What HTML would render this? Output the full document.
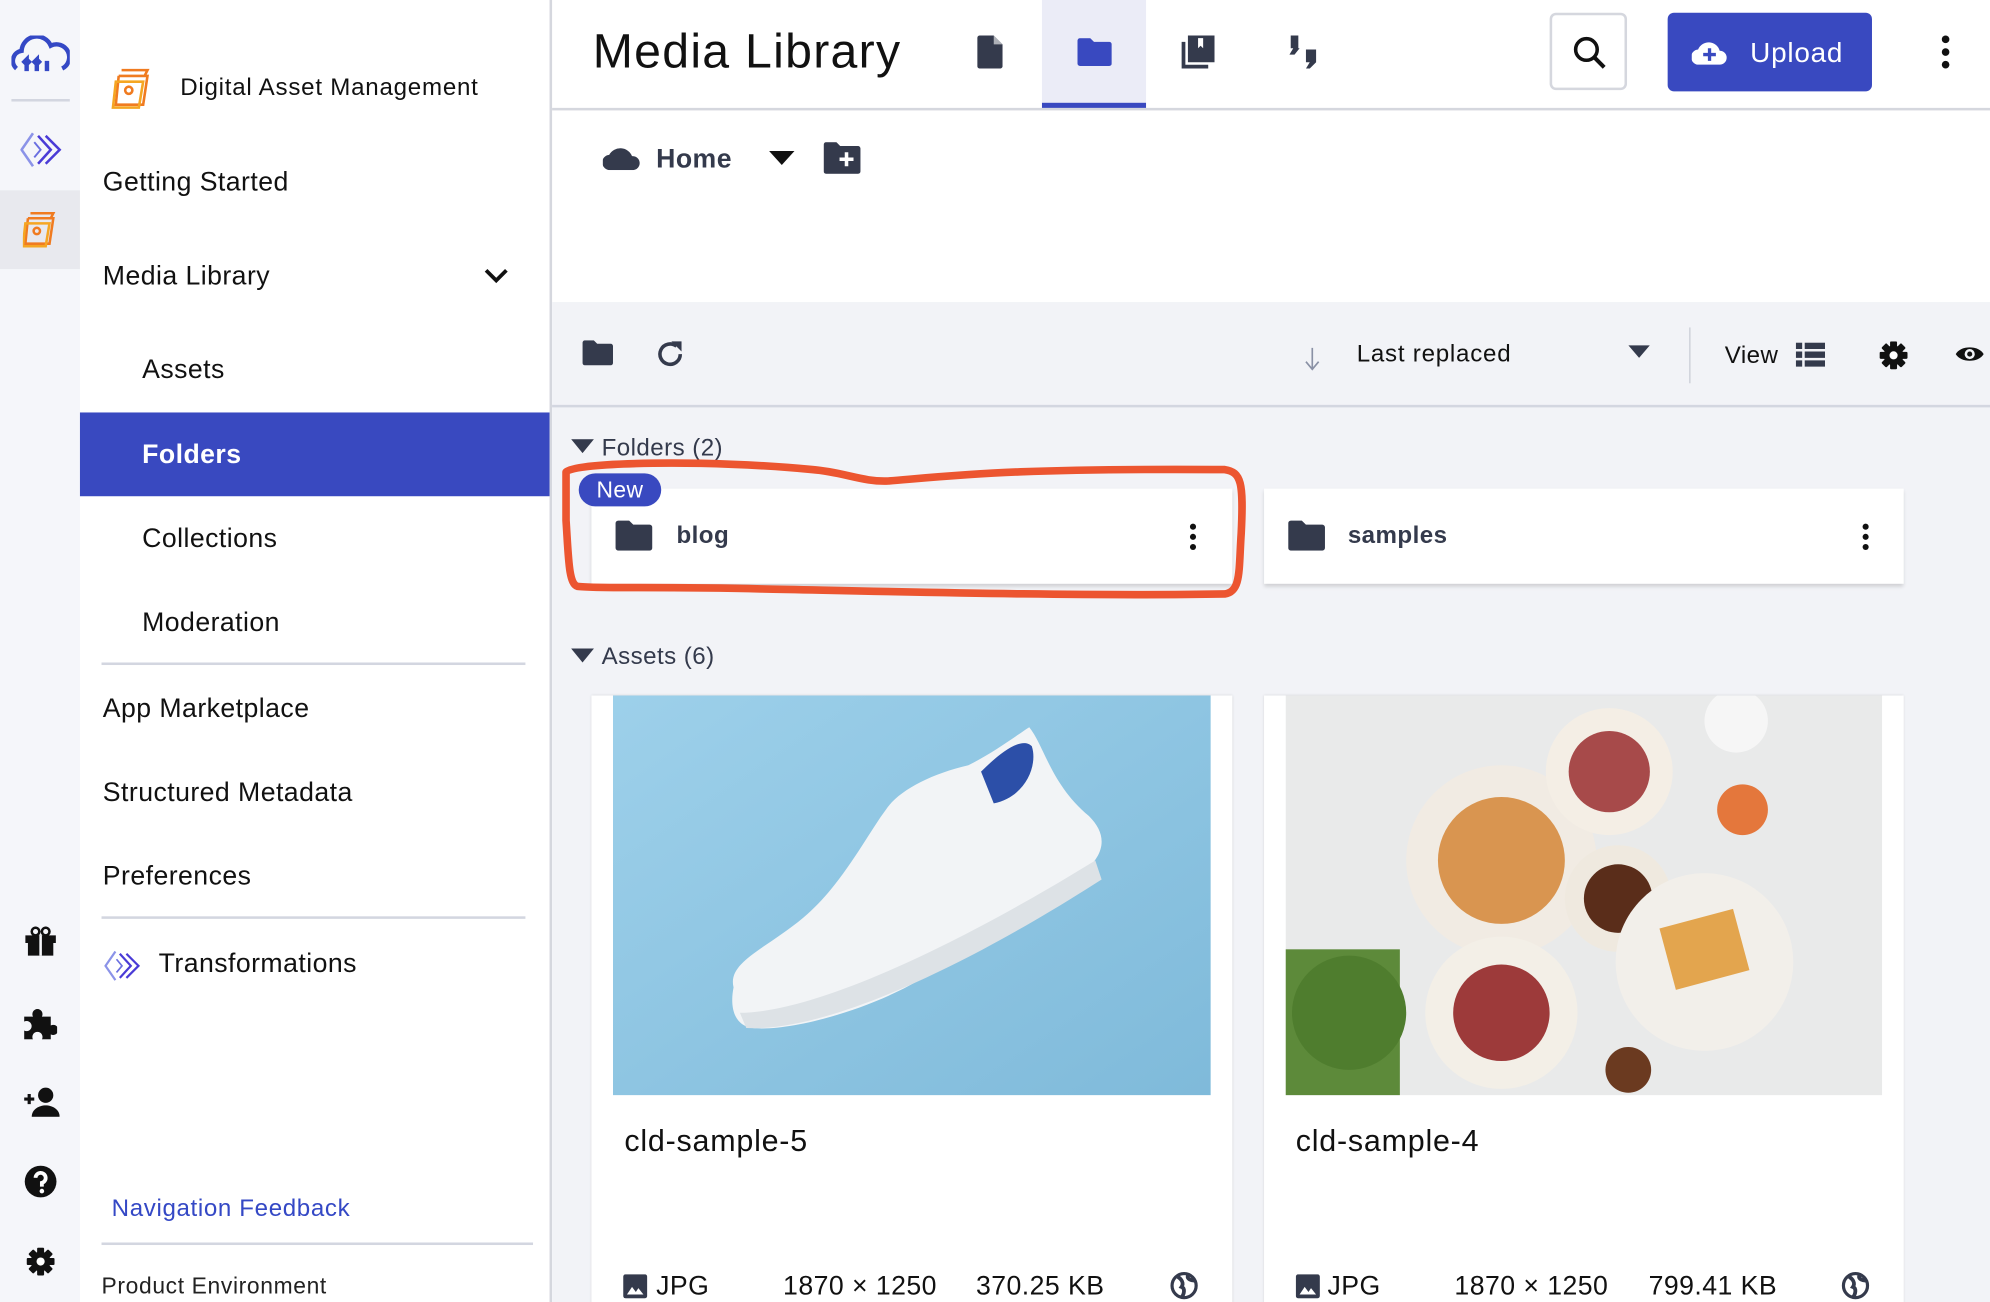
<!DOCTYPE html>
<html><head><meta charset="utf-8"><style>
*{box-sizing:border-box;margin:0;padding:0}
html,body{width:1990px;height:1302px;overflow:hidden;background:#fff;font-family:"Liberation Sans",sans-serif;color:#111;letter-spacing:0.35px}
#w{position:absolute;left:0;top:0;width:1568px;height:1026px;transform:scale(1.26914);transform-origin:0 0;overflow:hidden}
.a{position:absolute}
.nav{font-size:21px;color:#111;margin-top:2px}
.ico{position:absolute}
</style></head><body><div id="w">
<svg width="0" height="0" style="position:absolute"><defs><g id="gear"><g fill="#111"><rect x="9" y="0" width="6" height="24" rx="1"/><rect x="9" y="0" width="6" height="24" rx="1" transform="rotate(45 12 12)"/><rect x="9" y="0" width="6" height="24" rx="1" transform="rotate(90 12 12)"/><rect x="9" y="0" width="6" height="24" rx="1" transform="rotate(135 12 12)"/><circle cx="12" cy="12" r="8.5"/></g><circle cx="12" cy="12" r="3.5" fill="#fff"/></g></defs></svg>
<!-- rail -->
<div class="a" style="left:0;top:0;width:63px;height:1026px;background:#f5f6fa"></div>
<div class="a" style="left:0;top:150px;width:63px;height:62px;background:#e8e9ee"></div>
<div class="a" style="left:9px;top:78px;width:46px;height:2px;background:#d3d6e0"></div>
<svg class="ico" style="left:9px;top:28px" width="46" height="30" viewBox="0 0 46 30"><path d="M4 26 A8 8 0 0 1 8 12 A12 12 0 0 1 31 8 A9 9 0 0 1 40 26" fill="none" stroke="#3448c5" stroke-width="3.5"/><path d="M12 28v-9l-3 3M12 19l3 3M20 28v-9l-3 3M20 19l3 3M28 28v-8" stroke="#3448c5" stroke-width="3.5" fill="none"/></svg>
<svg class="ico" style="left:16px;top:103px" width="34" height="30" viewBox="0 0 34 30"><path d="M10 2 L1 15 L10 28" fill="none" stroke="#8b93e8" stroke-width="2"/><path d="M14 4 L24 15 L14 26 M20 4 L31 15 L20 26" fill="none" stroke="#4a3bd6" stroke-width="2"/><path d="M11 9 L16 15 L11 21" fill="none" stroke="#6a6fe0" stroke-width="1.5"/></svg>
<svg class="ico" style="left:18px;top:166px" width="30" height="30" viewBox="0 0 30 30"><g fill="none" stroke="#f07b20" stroke-width="2"><path d="M6 2h18l-2 4M4 6h20l-3 20H2l2-20"/><path d="M2 10h19l-3 18H0z" stroke="#f5a623"/><circle cx="11" cy="16" r="2.5"/></g></svg>
<svg class="ico" style="left:19px;top:730px" width="26" height="24" viewBox="0 0 26 24"><path d="M1 7h24v6H1zM3 13h20v10H3z" fill="#111"/><rect x="12" y="7" width="2" height="16" fill="#f5f6fa"/><circle cx="9" cy="4" r="3" fill="none" stroke="#111" stroke-width="2"/><circle cx="17" cy="4" r="3" fill="none" stroke="#111" stroke-width="2"/></svg>
<svg class="ico" style="left:19px;top:793px" width="26" height="26" viewBox="0 0 26 26"><path d="M0 8h7a4 4 0 1 1 7 0h7v7a4 4 0 1 1 0 7v4h-7a4 4 0 1 0-7 0H0v-7a4 4 0 1 0 0-7z" fill="#111"/></svg>
<svg class="ico" style="left:19px;top:856px" width="28" height="24" viewBox="0 0 28 24"><path d="M0 10h8M4 6v8" stroke="#111" stroke-width="2.5"/><circle cx="17" cy="7" r="6" fill="#111"/><path d="M6 24c0-6 6-9 11-9s11 3 11 9z" fill="#111"/></svg>
<svg class="ico" style="left:19px;top:918px" width="26" height="26" viewBox="0 0 26 26"><circle cx="13" cy="13" r="12.5" fill="#111"/><path d="M9 10a4 4 0 1 1 5 4v3" stroke="#fff" stroke-width="3" fill="none"/><circle cx="14" cy="20.5" r="1.8" fill="#fff"/></svg>
<svg class="ico" style="left:21px;top:983px" width="22" height="22" viewBox="0 0 24 24"><use href="#gear"/></svg>
<!-- nav panel -->
<div class="a" style="left:433px;top:0;width:2px;height:1026px;background:#d5d7de"></div>
<svg class="ico" style="left:87px;top:53px" width="38" height="34" viewBox="0 0 30 30"><g fill="none" stroke="#f07b20" stroke-width="1.8"><path d="M6 2h18l-2 4M4 6h20l-3 20H2l2-20"/><path d="M2 10h19l-3 18H0z" stroke="#f5a623"/><circle cx="11" cy="16" r="2.5"/></g></svg>
<div class="a" style="left:142px;top:59px;font-size:19px;letter-spacing:0.6px">Digital Asset Management</div>
<div class="a nav" style="left:81px;top:130px">Getting Started</div>
<div class="a nav" style="left:81px;top:204px">Media Library</div>
<svg class="ico" style="left:381px;top:211px" width="20" height="13" viewBox="0 0 20 13"><path d="M2 2l8 8 8-8" stroke="#111" stroke-width="3" fill="none"/></svg>
<div class="a nav" style="left:112px;top:278px">Assets</div>
<div class="a" style="left:63px;top:325px;width:370px;height:66px;background:#3949c0"></div>
<div class="a nav" style="left:112px;top:345px;color:#fff;font-weight:bold">Folders</div>
<div class="a nav" style="left:112px;top:411px">Collections</div>
<div class="a nav" style="left:112px;top:477px">Moderation</div>
<div class="a" style="left:80px;top:522px;width:334px;height:2px;background:#d3d6e0"></div>
<div class="a nav" style="left:81px;top:545px">App Marketplace</div>
<div class="a nav" style="left:81px;top:611px">Structured Metadata</div>
<div class="a nav" style="left:81px;top:677px">Preferences</div>
<div class="a" style="left:80px;top:722px;width:334px;height:2px;background:#d3d6e0"></div>
<svg class="ico" style="left:82px;top:748px" width="30" height="26" viewBox="0 0 34 30"><path d="M10 2 L1 15 L10 28" fill="none" stroke="#8b93e8" stroke-width="2"/><path d="M14 4 L24 15 L14 26 M20 4 L31 15 L20 26" fill="none" stroke="#4a3bd6" stroke-width="2"/><path d="M11 9 L16 15 L11 21" fill="none" stroke="#6a6fe0" stroke-width="1.5"/></svg>
<div class="a nav" style="left:125px;top:746px">Transformations</div>
<div class="a" style="left:88px;top:942px;font-size:19px;color:#3448c5;letter-spacing:0.5px">Navigation Feedback</div>
<div class="a" style="left:80px;top:979px;width:340px;height:2px;background:#d3d6e0"></div>
<div class="a" style="left:80px;top:1003px;font-size:18px;color:#222;letter-spacing:0.5px">Product Environment</div>
<!-- header -->
<div class="a" style="left:435px;top:85px;width:1133px;height:2px;background:#d5d7de"></div>
<div class="a" style="left:467px;top:20px;font-size:38px;color:#111;letter-spacing:1px">Media Library</div>
<svg class="ico" style="left:770px;top:28px" width="20" height="26" viewBox="0 0 20 26"><path d="M0 2a2 2 0 0 1 2-2h11l7 7v17a2 2 0 0 1-2 2H2a2 2 0 0 1-2-2z" fill="#343a4c"/><path d="M13 0v7h7" fill="#fff" opacity=".6"/></svg>
<div class="a" style="left:821px;top:0;width:82px;height:85px;background:#ebecf7"></div>
<div class="a" style="left:821px;top:81px;width:82px;height:4px;background:#3949c0"></div>
<svg class="ico" style="left:849px;top:30px" width="27" height="22" viewBox="0 0 27 22"><path d="M0 2a2 2 0 0 1 2-2h8l3 3h12a2 2 0 0 1 2 2v15a2 2 0 0 1-2 2H2a2 2 0 0 1-2-2z" fill="#3949c0"/></svg>
<svg class="ico" style="left:931px;top:28px" width="26" height="26" viewBox="0 0 26 26"><path d="M5 0h21v21H5z" fill="#343a4c"/><path d="M0 5v21h21v-3H3V5z" fill="#343a4c"/><path d="M17 2v8l-2-2-2 2V2z" fill="#fff"/></svg>
<svg class="ico" style="left:1013px;top:28px" width="28" height="26" viewBox="0 0 28 26"><path d="M4 0h6v10H4zM6 10h5l-4 5H3zM16 11h8v10h-8zM19 21h5l-5 5h-3z" fill="#343a4c"/></svg>
<div class="a" style="left:1221px;top:10px;width:61px;height:61px;border:2px solid #d5d7de;border-radius:5px;background:#fff"></div>
<svg class="ico" style="left:1239px;top:28px" width="28" height="28" viewBox="0 0 28 28"><circle cx="11" cy="11" r="8.5" fill="none" stroke="#111" stroke-width="2.8"/><path d="M17 17l8 8" stroke="#111" stroke-width="3.2"/></svg>
<div class="a" style="left:1314px;top:10px;width:161px;height:62px;background:#3949c0;border-radius:5px"></div>
<svg class="ico" style="left:1333px;top:31px" width="28" height="20" viewBox="0 0 28 20"><path d="M6 20a6 6 0 0 1-1-12 9 9 0 0 1 17 1 5.5 5.5 0 0 1 0 11z" fill="#fff"/><path d="M14 7v10M9 12h10" stroke="#3949c0" stroke-width="2.6"/></svg>
<div class="a" style="left:1379px;top:29px;font-size:22px;color:#fff;letter-spacing:0.6px">Upload</div>
<svg class="ico" style="left:1528px;top:27px" width="10" height="28" viewBox="0 0 10 28"><circle cx="5" cy="4" r="3" fill="#111"/><circle cx="5" cy="14" r="3" fill="#111"/><circle cx="5" cy="24" r="3" fill="#111"/></svg>
<!-- breadcrumb -->
<svg class="ico" style="left:475px;top:114px" width="30" height="20" viewBox="0 0 30 20"><path d="M6 20a6 6 0 0 1-1-12 10 10 0 0 1 18 1 5.5 5.5 0 0 1 1 11z" fill="#343a4c"/></svg>
<div class="a" style="left:517px;top:114px;font-size:21px;font-weight:bold;color:#343a4c">Home</div>
<svg class="ico" style="left:606px;top:119px" width="20" height="12" viewBox="0 0 20 12"><path d="M0 0h20L10 11z" fill="#111"/></svg>
<svg class="ico" style="left:649px;top:112px" width="29" height="25" viewBox="0 0 29 25"><path d="M0 2a2 2 0 0 1 2-2h8l3 3h14a2 2 0 0 1 2 2v18a2 2 0 0 1-2 2H2a2 2 0 0 1-2-2z" fill="#343a4c"/><path d="M18 8v11M12.5 13.5h11" stroke="#fff" stroke-width="2.8"/></svg>
<!-- content bg -->
<div class="a" style="left:435px;top:238px;width:1133px;height:788px;background:#f2f3f7"></div>
<div class="a" style="left:435px;top:319px;width:1133px;height:2px;background:#d3d6e0"></div>
<svg class="ico" style="left:459px;top:268px" width="24" height="20" viewBox="0 0 27 22"><path d="M0 2a2 2 0 0 1 2-2h8l3 3h12a2 2 0 0 1 2 2v15a2 2 0 0 1-2 2H2a2 2 0 0 1-2-2z" fill="#343a4c"/></svg>
<svg class="ico" style="left:516px;top:267px" width="24" height="24" viewBox="0 0 24 24"><path d="M20 12a8 8 0 1 1-3-6.2" fill="none" stroke="#343a4c" stroke-width="2.8"/><path d="M13 2h8v8z" fill="#343a4c"/></svg>
<svg class="ico" style="left:1028px;top:274px" width="12" height="18" viewBox="0 0 12 18"><path d="M6 0v16M1 11l5 6 5-6" fill="none" stroke="#8a91a5" stroke-width="1.3"/></svg>
<div class="a" style="left:1069px;top:269px;font-size:19px;color:#111;letter-spacing:0.6px">Last replaced</div>
<svg class="ico" style="left:1283px;top:272px" width="17" height="10" viewBox="0 0 17 10"><path d="M0 0h17L8.5 10z" fill="#343a4c"/></svg>
<div class="a" style="left:1331px;top:258px;width:1px;height:44px;background:#c9ccd6"></div>
<div class="a" style="left:1359px;top:270px;font-size:19px;color:#111">View</div>
<svg class="ico" style="left:1415px;top:270px" width="23" height="19" viewBox="0 0 23 19"><path d="M0 0h5v5H0zM7 0h16v5H7zM0 7h5v5H0zM7 7h16v5H7zM0 14h5v5H0zM7 14h16v5H7z" fill="#343a4c"/></svg>
<svg class="ico" style="left:1481px;top:269px" width="22" height="22" viewBox="0 0 24 24"><use href="#gear"/></svg>
<svg class="ico" style="left:1540px;top:270px" width="24" height="18" viewBox="0 0 24 18"><path d="M1 9C5 2 19 2 23 9 19 16 5 16 1 9z" fill="#111"/><circle cx="12" cy="9" r="4" fill="#f2f3f7"/><circle cx="12" cy="9" r="2" fill="#111"/></svg>
<!-- folders -->
<svg class="ico" style="left:450px;top:346px" width="18" height="11" viewBox="0 0 18 11"><path d="M0 0h18L9 11z" fill="#343a4c"/></svg>
<div class="a" style="left:474px;top:343px;font-size:19px;color:#343a4c">Folders (2)</div>
<div class="a" style="left:466px;top:385px;width:505px;height:75px;background:#fff;box-shadow:0 2px 3px rgba(0,0,0,.15)"></div>
<div class="a" style="left:996px;top:385px;width:504px;height:75px;background:#fff;box-shadow:0 2px 3px rgba(0,0,0,.15)"></div>
<svg class="ico" style="left:485px;top:410px" width="29" height="24" viewBox="0 0 27 22"><path d="M0 2a2 2 0 0 1 2-2h8l3 3h12a2 2 0 0 1 2 2v15a2 2 0 0 1-2 2H2a2 2 0 0 1-2-2z" fill="#343a4c"/></svg>
<div class="a" style="left:533px;top:412px;font-size:19px;font-weight:bold;color:#343a4c">blog</div>
<svg class="ico" style="left:936px;top:412px" width="8" height="22" viewBox="0 0 8 22"><circle cx="4" cy="3" r="2.4" fill="#111"/><circle cx="4" cy="11" r="2.4" fill="#111"/><circle cx="4" cy="19" r="2.4" fill="#111"/></svg>
<svg class="ico" style="left:1015px;top:410px" width="29" height="24" viewBox="0 0 27 22"><path d="M0 2a2 2 0 0 1 2-2h8l3 3h12a2 2 0 0 1 2 2v15a2 2 0 0 1-2 2H2a2 2 0 0 1-2-2z" fill="#343a4c"/></svg>
<div class="a" style="left:1062px;top:412px;font-size:19px;font-weight:bold;color:#343a4c">samples</div>
<svg class="ico" style="left:1466px;top:412px" width="8" height="22" viewBox="0 0 8 22"><circle cx="4" cy="3" r="2.4" fill="#111"/><circle cx="4" cy="11" r="2.4" fill="#111"/><circle cx="4" cy="19" r="2.4" fill="#111"/></svg>
<div class="a" style="left:456px;top:373px;width:65px;height:26px;background:#3949c0;border-radius:13px;color:#fff;font-size:18px;line-height:26px;text-align:center">New</div>
<svg class="ico" style="left:0;top:0" width="1568" height="1026"><path d="M446 372 C450 364 560 362 640 370 C665 372 680 380 700 379 C760 374 800 369 965 370 C978 372 980 380 978 420 C976 450 978 466 965 468 C850 470 700 466 600 464 C520 462 470 464 455 462 C448 460 448 440 446 410 Z" fill="none" stroke="#ec5530" stroke-width="6" stroke-linejoin="round"/></svg>
<!-- assets -->
<svg class="ico" style="left:450px;top:511px" width="18" height="11" viewBox="0 0 18 11"><path d="M0 0h18L9 11z" fill="#343a4c"/></svg>
<div class="a" style="left:474px;top:507px;font-size:19px;color:#343a4c">Assets (6)</div>
<div class="a" style="left:466px;top:548px;width:505px;height:500px;background:#fff;box-shadow:0 0 2px rgba(0,0,0,.12)"></div>
<div class="a" style="left:996px;top:548px;width:504px;height:500px;background:#fff;box-shadow:0 0 2px rgba(0,0,0,.12)"></div>
<svg class="ico" style="left:483px;top:548px" width="471" height="315" viewBox="0 0 471 315"><defs><linearGradient id="g1" x1="0" y1="0" x2="1" y2="1"><stop offset="0" stop-color="#9dd0ea"/><stop offset="1" stop-color="#7fbada"/></linearGradient></defs><rect width="471" height="315" fill="url(#g1)"/><path d="M95 230 C90 210 120 200 150 175 C180 150 200 110 215 90 C225 75 250 62 280 55 C300 45 320 30 328 25 C340 40 345 70 375 95 C390 110 388 125 370 140 C330 170 280 200 240 225 C200 248 140 265 110 262 C95 260 92 245 95 230Z" fill="#f2f4f6"/><path d="M290 60 C305 45 322 32 330 40 C335 55 325 80 300 85Z" fill="#2c4fa8"/><path d="M100 250 C150 250 250 210 380 130 L385 145 C260 225 160 265 105 262Z" fill="#dde2e6"/></svg>
<svg class="ico" style="left:1013px;top:548px" width="470" height="315" viewBox="0 0 470 315"><rect width="470" height="315" fill="#e9eaea"/><rect x="0" y="200" width="90" height="115" fill="#5d8a3a"/><circle cx="50" cy="250" r="45" fill="#4f7d2e"/><circle cx="170" cy="130" r="75" fill="#f1ebe3"/><circle cx="170" cy="130" r="50" fill="#d99550"/><circle cx="255" cy="60" r="50" fill="#f4eee5"/><circle cx="255" cy="60" r="32" fill="#a74a4a"/><circle cx="262" cy="160" r="42" fill="#efe9df"/><circle cx="262" cy="160" r="27" fill="#5a2d1a"/><circle cx="330" cy="210" r="70" fill="#f2efea"/><rect x="300" y="175" width="60" height="50" fill="#e3a54e" transform="rotate(-15 330 200)"/><circle cx="170" cy="250" r="60" fill="#f3efe7"/><circle cx="170" cy="250" r="38" fill="#9d3a3a"/><circle cx="360" cy="90" r="20" fill="#e4773c"/><circle cx="355" cy="20" r="25" fill="#f6f6f6"/><circle cx="270" cy="295" r="18" fill="#6b3a20"/></svg>
<div class="a" style="left:492px;top:886px;font-size:24px;color:#111;letter-spacing:0.6px">cld-sample-5</div>
<div class="a" style="left:1021px;top:886px;font-size:24px;color:#111;letter-spacing:0.6px">cld-sample-4</div>
<svg class="ico" style="left:491px;top:1004px" width="19" height="19" viewBox="0 0 19 19"><rect width="19" height="19" rx="2" fill="#343a4c"/><path d="M3 16l4-6 3 4 2-3 4 5z" fill="#fff"/></svg>
<div class="a" style="left:517px;top:1002px;font-size:21px">JPG</div>
<div class="a" style="left:617px;top:1002px;font-size:21px">1870 × 1250</div>
<div class="a" style="left:769px;top:1002px;font-size:21px">370.25 KB</div>
<svg class="ico" style="left:922px;top:1002px" width="22" height="22" viewBox="0 0 22 22"><circle cx="11" cy="11" r="9.5" fill="none" stroke="#343a4c" stroke-width="2.5"/><path d="M6 4c3 2 5 5 3 8 3 1 2 6 0 8M14 3c-1 3 3 4 5 4" fill="none" stroke="#343a4c" stroke-width="3"/></svg>
<svg class="ico" style="left:1021px;top:1004px" width="19" height="19" viewBox="0 0 19 19"><rect width="19" height="19" rx="2" fill="#343a4c"/><path d="M3 16l4-6 3 4 2-3 4 5z" fill="#fff"/></svg>
<div class="a" style="left:1046px;top:1002px;font-size:21px">JPG</div>
<div class="a" style="left:1146px;top:1002px;font-size:21px">1870 × 1250</div>
<div class="a" style="left:1299px;top:1002px;font-size:21px">799.41 KB</div>
<svg class="ico" style="left:1451px;top:1002px" width="22" height="22" viewBox="0 0 22 22"><circle cx="11" cy="11" r="9.5" fill="none" stroke="#343a4c" stroke-width="2.5"/><path d="M6 4c3 2 5 5 3 8 3 1 2 6 0 8M14 3c-1 3 3 4 5 4" fill="none" stroke="#343a4c" stroke-width="3"/></svg>
</div></body></html>
